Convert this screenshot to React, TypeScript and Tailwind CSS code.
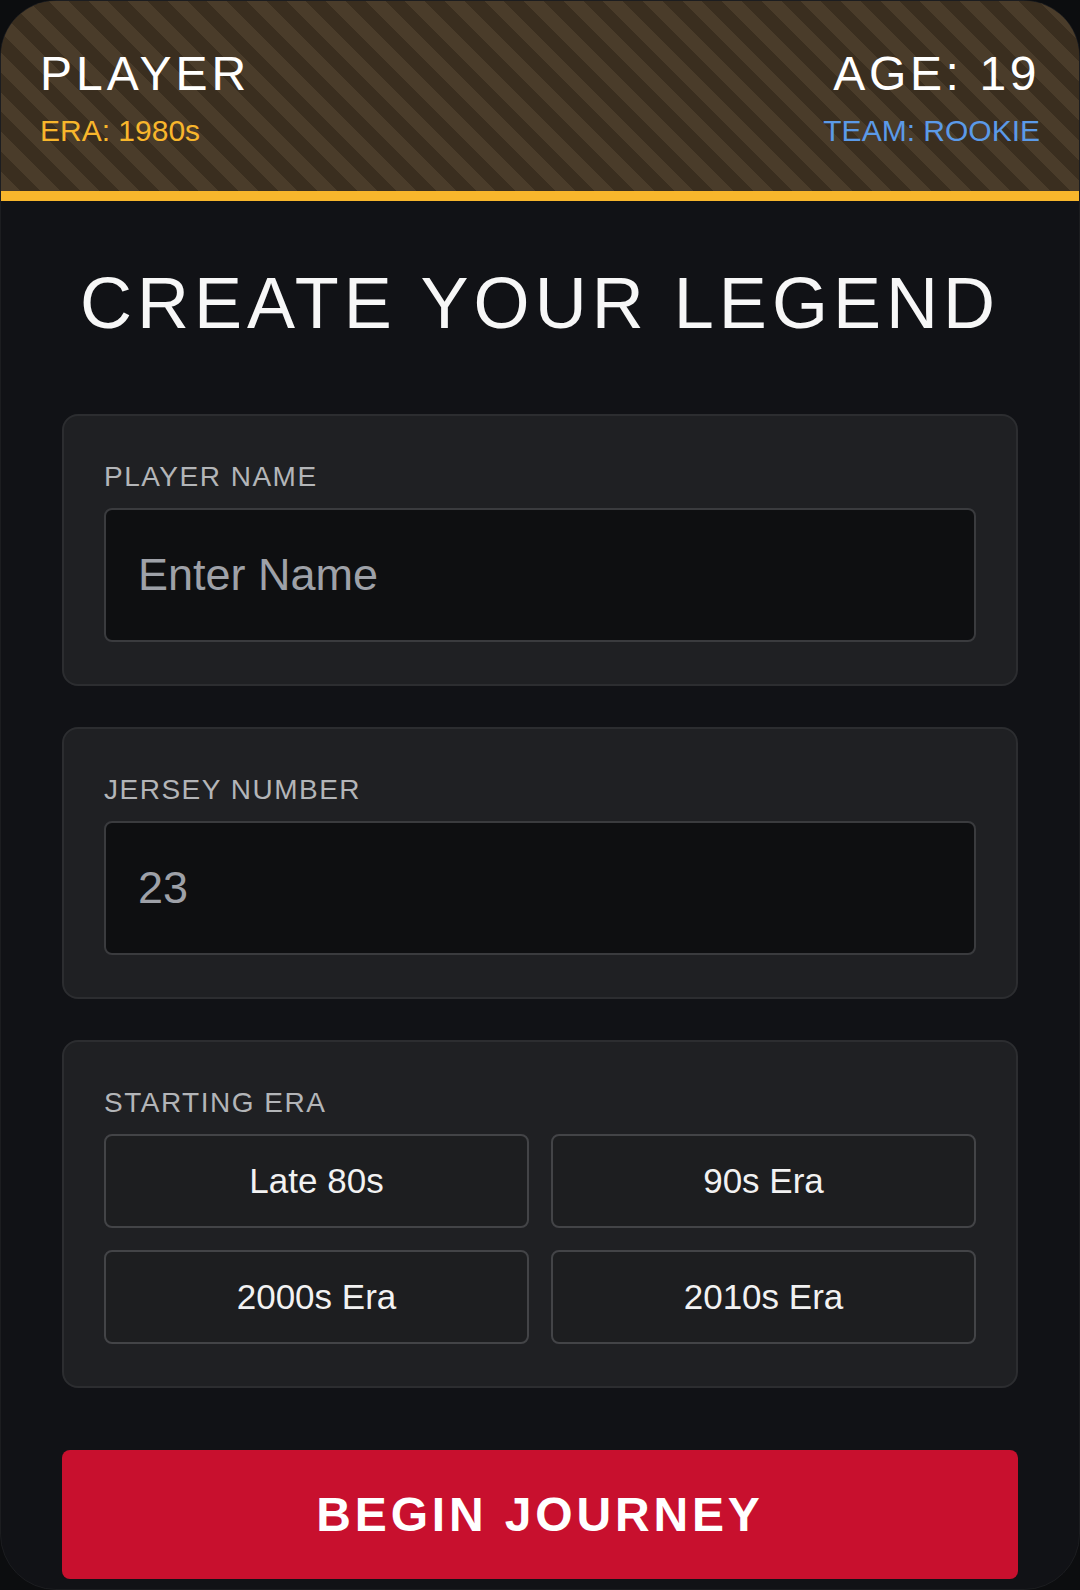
import React from "react";

const font = { fontFamily: '"Liberation Sans", Arial, Helvetica, sans-serif' };

function Card({ label, children }: { label: string; children: React.ReactNode }) {
  return (
    <div className="rounded-2xl border-2 border-[#2c2d30] bg-[#1f2023] px-10 pb-[42px] pt-10">
      <div className="text-[28px] leading-[42px] tracking-[1.5px] text-[#b3b5b8]">{label}</div>
      <div className="mt-[10px]">{children}</div>
    </div>
  );
}

function TextInput({ placeholder }: { placeholder: string }) {
  return (
    <input
      type="text"
      placeholder={placeholder}
      className="block h-[134px] w-full rounded-lg border-2 border-[#3a3b3e] bg-[#0e0f11] px-8 text-[45px] text-[#a3a5ab] outline-none placeholder:text-[#9ea1a8]"
      style={font}
    />
  );
}

export default function App() {
  const eras = ["Late 80s", "90s Era", "2000s Era", "2010s Era"];
  return (
    <div className="h-[1590px] w-full bg-[#0c0d0f]" style={font}>
      <div className="h-[1590px] w-full overflow-hidden rounded-[56px] border border-[#1c1d20] bg-[#111216]">
        <header
          className="flex justify-between border-b-[10px] border-[#f8b62c] pb-[45px] pl-[39px] pr-[39px] pt-[49px]"
          style={{
            backgroundColor: "#3b2f20",
            backgroundImage:
              "repeating-linear-gradient(45deg, #4a3c2a 0px, #4a3c2a 14px, #3a2e1f 14px, #3a2e1f 28px)",
          }}
        >
          <div className="flex flex-col">
            <div className="text-[48px] leading-none tracking-[0.085em] text-white">PLAYER</div>
            <div className="mt-[18px] text-[30px] leading-none text-[#f8b62c]">ERA: 1980s</div>
          </div>
          <div className="flex flex-col items-end">
            <div className="text-[48px] leading-none tracking-[0.075em] text-white">AGE: 19</div>
            <div className="mt-[18px] text-[30px] leading-none text-[#5b9ae8]">TEAM: ROOKIE</div>
          </div>
        </header>

        <main className="px-[61px] pt-[66px]">
          <h1 className="text-center text-[72px] font-normal leading-none tracking-[0.07em] text-[#f7f7f7]">
            CREATE YOUR LEGEND
          </h1>

          <div className="mt-[75px] flex flex-col gap-[41px]">
            <Card label="PLAYER NAME">
              <TextInput placeholder="Enter Name" />
            </Card>
            <Card label="JERSEY NUMBER">
              <TextInput placeholder="23" />
            </Card>
            <Card label="STARTING ERA">
              <div className="grid grid-cols-2 gap-[22px]">
                {eras.map((e) => (
                  <button
                    key={e}
                    className="flex h-[94px] items-center justify-center rounded-lg border-2 border-[#434447] bg-[#1d1e20] text-[35px] text-[#f2f2f2]"
                    style={font}
                  >
                    {e}
                  </button>
                ))}
              </div>
            </Card>
          </div>

          <button
            className="mt-[62px] flex h-[129px] w-full items-center justify-center rounded-lg bg-[#c8102e] text-[48px] font-bold tracking-[0.08em] text-white"
            style={font}
          >
            BEGIN JOURNEY
          </button>
        </main>
      </div>
    </div>
  );
}
